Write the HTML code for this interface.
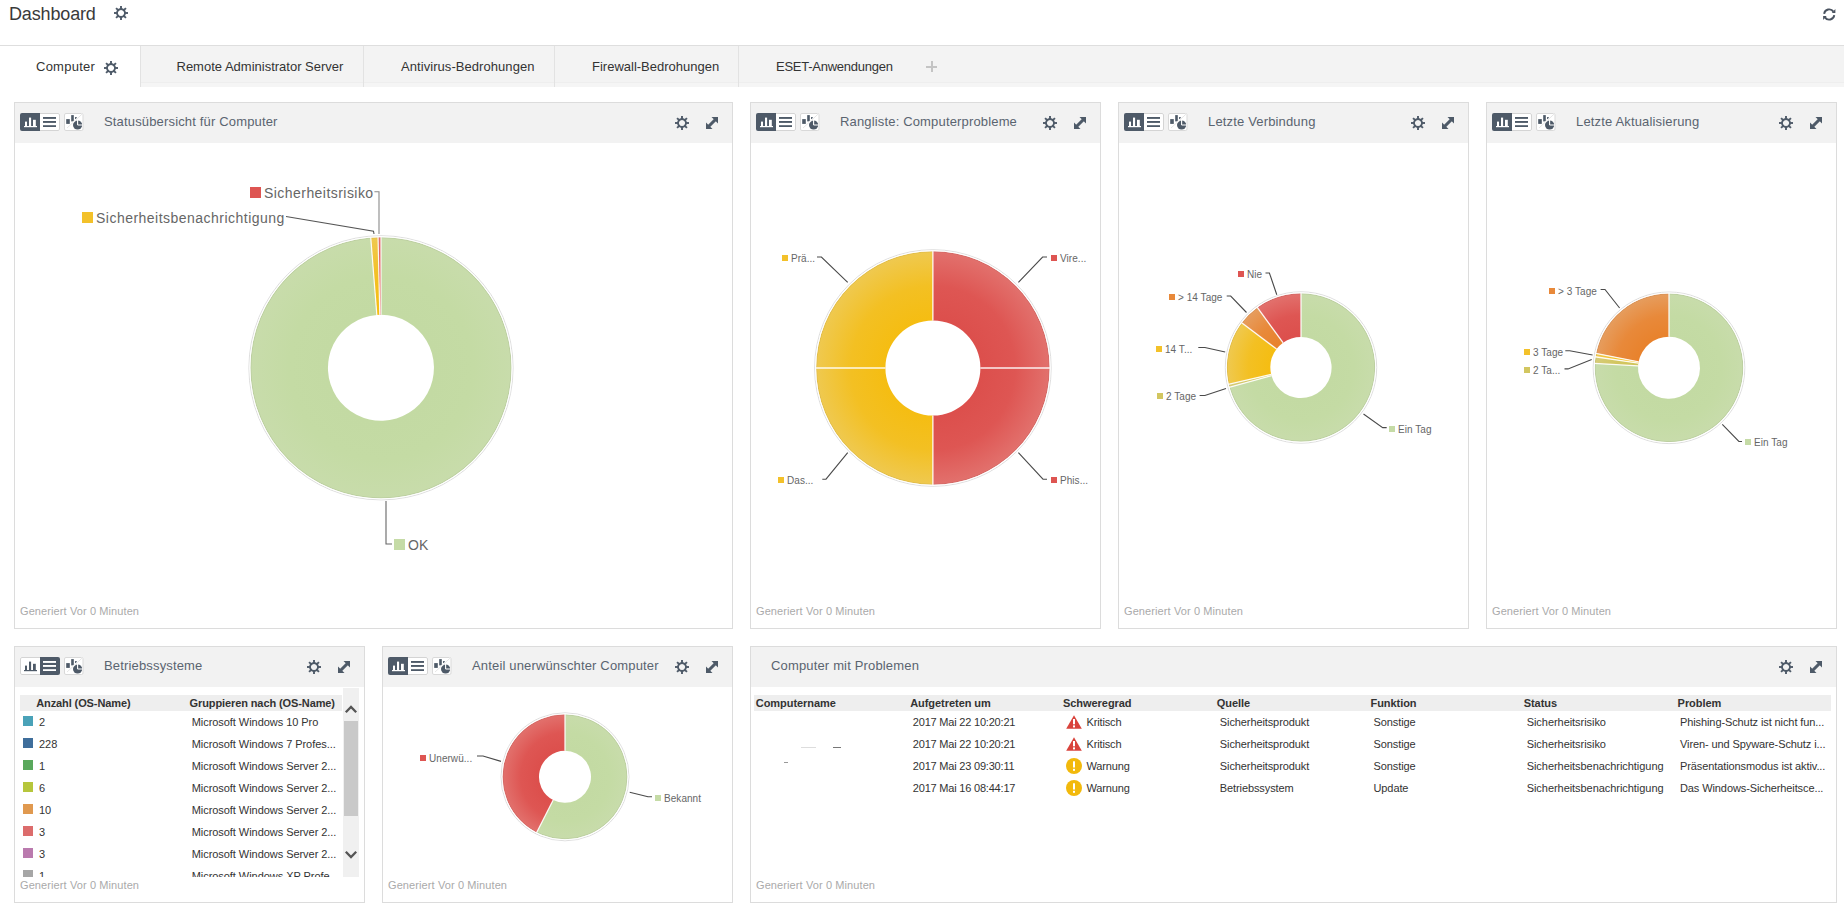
<!DOCTYPE html><html><head><meta charset="utf-8"><style>
html,body{margin:0;padding:0}
body{width:1844px;height:911px;overflow:hidden;position:relative;background:#fff;font-family:"Liberation Sans",sans-serif}
.a{position:absolute;white-space:nowrap;line-height:1}
.panel{border:1px solid #dcdcdc;background:#fff}
</style></head><body>
<svg width="0" height="0" style="position:absolute"><defs>
<symbol id="gear" viewBox="0 0 14 14"><g fill="#4e5a68"><path fill-rule="evenodd" d="M7 2.1A4.9 4.9 0 1 1 6.99 2.1ZM7 3.95A3.05 3.05 0 1 0 7.01 3.95Z"/>
<g id="teeth"><rect x="6.05" y="0" width="1.9" height="3"/><rect x="6.05" y="11" width="1.9" height="3"/><rect x="0" y="6.05" width="3" height="1.9"/><rect x="11" y="6.05" width="3" height="1.9"/></g>
<use href="#teeth" transform="rotate(45 7 7)"/></g></symbol>
<symbol id="exp" viewBox="0 0 12 12"><g fill="#4e5a68"><path d="M5.5 0H12V6.5Z"/><path d="M0 5.5V12H6.5Z"/><path d="M8.9 0.9L11.1 3.1L3.1 11.1L0.9 8.9Z"/></g></symbol>
</defs></svg>

<div class="a" style="left:9.0px;top:4.7px;font-size:18px;color:#3a3a3a;font-weight:normal;letter-spacing:-0.15px">Dashboard</div>
<svg class="a" style="left:114px;top:6px" width="14" height="14"><use href="#gear"/></svg>
<svg class="a" style="left:1823px;top:8px" width="13" height="13" viewBox="0 0 13 13"><g fill="none" stroke="#4a5360" stroke-width="1.9"><path d="M1.14 5.88A5.1 5.1 0 0 1 10.43 3.65"/><path d="M11.26 7.12A5.1 5.1 0 0 1 1.97 9.35"/></g><g fill="#4a5360"><path d="M8.8 4.9H12.4V1.1Z"/><path d="M0.1 8.1H3.7L0.1 12Z"/></g></svg>
<div class="a" style="left:0;top:45px;width:1844px;height:1px;background:#dedede"></div>
<div class="a" style="left:0;top:46px;width:1844px;height:41px;background:#f3f3f3"></div>
<div class="a" style="left:0;top:82px;width:1844px;height:1px;background:#eeeeee"></div>
<div class="a" style="left:0;top:83px;width:1844px;height:4px;background:#f5f5f5"></div>
<div class="a" style="left:0;top:46px;width:140px;height:41px;background:#fff"></div>
<div class="a" style="left:140px;top:46px;width:1px;height:41px;background:#e2e2e2"></div>
<div class="a" style="left:363px;top:46px;width:1px;height:41px;background:#e2e2e2"></div>
<div class="a" style="left:554px;top:46px;width:1px;height:41px;background:#e2e2e2"></div>
<div class="a" style="left:738px;top:46px;width:1px;height:41px;background:#e2e2e2"></div>
<div class="a" style="left:36.0px;top:60.1px;font-size:13px;color:#333;font-weight:normal;letter-spacing:0.25px">Computer</div>
<svg class="a" style="left:104px;top:61px" width="14" height="14"><use href="#gear"/></svg>
<div class="a" style="left:176.5px;top:60.1px;font-size:13px;color:#333;font-weight:normal;">Remote Administrator Server</div>
<div class="a" style="left:401.0px;top:60.1px;font-size:13px;color:#333;font-weight:normal;letter-spacing:0.06px">Antivirus-Bedrohungen</div>
<div class="a" style="left:592.0px;top:60.1px;font-size:13px;color:#333;font-weight:normal;">Firewall-Bedrohungen</div>
<div class="a" style="left:776.0px;top:60.1px;font-size:13px;color:#333;font-weight:normal;letter-spacing:-0.25px">ESET-Anwendungen</div>
<div class="a" style="left:926px;top:65.5px;width:11px;height:2px;background:#c4c4c4"></div>
<div class="a" style="left:930.5px;top:61px;width:2px;height:11px;background:#c4c4c4"></div>
<div class="a panel" style="left:14px;top:102px;width:717px;height:525px"></div>
<div class="a" style="left:15px;top:103px;width:717px;height:40px;background:#f2f2f2"></div>
<svg class="a" style="left:20px;top:113px" width="64" height="18" viewBox="0 0 64 18"><rect x="0.5" y="0.5" width="39" height="17" rx="2" fill="#fff"/><path d="M2 0H20V18H2A2 2 0 0 1 0 16V2A2 2 0 0 1 2 0Z" fill="#4e5a68"/><g fill="#fff"><rect x="4" y="13" width="13" height="1.2"/><rect x="5" y="8.6" width="2" height="4.6"/><rect x="9" y="4.6" width="2.1" height="8.6"/><rect x="13" y="6.8" width="2.8" height="6.4"/></g><path d="M20 0H38A2 2 0 0 1 40 2V16A2 2 0 0 1 38 18H20Z" fill="#fff"/><g fill="#4e5a68"><rect x="23" y="4" width="13" height="1.9"/><rect x="23" y="8" width="13" height="1.9"/><rect x="23" y="12.2" width="13" height="1.8"/></g><path d="M20 0.5H38A1.5 1.5 0 0 1 39.5 2V16A1.5 1.5 0 0 1 38 17.5H20" fill="none" stroke="#d4d4d4"/><rect x="44.5" y="0.5" width="18.5" height="17" rx="1.5" fill="#fff" stroke="#d9d9d9"/><g fill="#4e5a68"><rect x="46.2" y="6.1" width="3.6" height="4.8"/><rect x="51.2" y="2.1" width="2.6" height="6.3"/><rect x="55.1" y="4" width="1.6" height="2"/><circle cx="57.6" cy="12" r="4.6"/></g><path d="M57.6 12V6.5M57.6 12H63" stroke="#fff" stroke-width="1.1"/><line x1="47" y1="15" x2="62.2" y2="1" stroke="#fff" stroke-width="1.4"/><line x1="47" y1="15" x2="62.2" y2="1" stroke="#ccc" stroke-width="0.5"/></svg>
<div class="a" style="left:104.0px;top:115.2px;font-size:13px;color:#5a6470;font-weight:normal;letter-spacing:0.16px">Statusübersicht für Computer</div>
<svg class="a" style="left:675px;top:116px" width="14" height="14"><use href="#gear"/></svg>
<svg class="a" style="left:706px;top:117px" width="12" height="12"><use href="#exp"/></svg>
<div class="a" style="left:20.0px;top:605.6px;font-size:11px;color:#aaa;font-weight:normal;letter-spacing:0.1px">Generiert Vor 0 Minuten</div>
<div class="a panel" style="left:750px;top:102px;width:349px;height:525px"></div>
<div class="a" style="left:751px;top:103px;width:349px;height:40px;background:#f2f2f2"></div>
<svg class="a" style="left:756px;top:113px" width="64" height="18" viewBox="0 0 64 18"><rect x="0.5" y="0.5" width="39" height="17" rx="2" fill="#fff"/><path d="M2 0H20V18H2A2 2 0 0 1 0 16V2A2 2 0 0 1 2 0Z" fill="#4e5a68"/><g fill="#fff"><rect x="4" y="13" width="13" height="1.2"/><rect x="5" y="8.6" width="2" height="4.6"/><rect x="9" y="4.6" width="2.1" height="8.6"/><rect x="13" y="6.8" width="2.8" height="6.4"/></g><path d="M20 0H38A2 2 0 0 1 40 2V16A2 2 0 0 1 38 18H20Z" fill="#fff"/><g fill="#4e5a68"><rect x="23" y="4" width="13" height="1.9"/><rect x="23" y="8" width="13" height="1.9"/><rect x="23" y="12.2" width="13" height="1.8"/></g><path d="M20 0.5H38A1.5 1.5 0 0 1 39.5 2V16A1.5 1.5 0 0 1 38 17.5H20" fill="none" stroke="#d4d4d4"/><rect x="44.5" y="0.5" width="18.5" height="17" rx="1.5" fill="#fff" stroke="#d9d9d9"/><g fill="#4e5a68"><rect x="46.2" y="6.1" width="3.6" height="4.8"/><rect x="51.2" y="2.1" width="2.6" height="6.3"/><rect x="55.1" y="4" width="1.6" height="2"/><circle cx="57.6" cy="12" r="4.6"/></g><path d="M57.6 12V6.5M57.6 12H63" stroke="#fff" stroke-width="1.1"/><line x1="47" y1="15" x2="62.2" y2="1" stroke="#fff" stroke-width="1.4"/><line x1="47" y1="15" x2="62.2" y2="1" stroke="#ccc" stroke-width="0.5"/></svg>
<div class="a" style="left:840.0px;top:115.2px;font-size:13px;color:#5a6470;font-weight:normal;letter-spacing:0.16px">Rangliste: Computerprobleme</div>
<svg class="a" style="left:1043px;top:116px" width="14" height="14"><use href="#gear"/></svg>
<svg class="a" style="left:1074px;top:117px" width="12" height="12"><use href="#exp"/></svg>
<div class="a" style="left:756.0px;top:605.6px;font-size:11px;color:#aaa;font-weight:normal;letter-spacing:0.1px">Generiert Vor 0 Minuten</div>
<div class="a panel" style="left:1118px;top:102px;width:349px;height:525px"></div>
<div class="a" style="left:1119px;top:103px;width:349px;height:40px;background:#f2f2f2"></div>
<svg class="a" style="left:1124px;top:113px" width="64" height="18" viewBox="0 0 64 18"><rect x="0.5" y="0.5" width="39" height="17" rx="2" fill="#fff"/><path d="M2 0H20V18H2A2 2 0 0 1 0 16V2A2 2 0 0 1 2 0Z" fill="#4e5a68"/><g fill="#fff"><rect x="4" y="13" width="13" height="1.2"/><rect x="5" y="8.6" width="2" height="4.6"/><rect x="9" y="4.6" width="2.1" height="8.6"/><rect x="13" y="6.8" width="2.8" height="6.4"/></g><path d="M20 0H38A2 2 0 0 1 40 2V16A2 2 0 0 1 38 18H20Z" fill="#fff"/><g fill="#4e5a68"><rect x="23" y="4" width="13" height="1.9"/><rect x="23" y="8" width="13" height="1.9"/><rect x="23" y="12.2" width="13" height="1.8"/></g><path d="M20 0.5H38A1.5 1.5 0 0 1 39.5 2V16A1.5 1.5 0 0 1 38 17.5H20" fill="none" stroke="#d4d4d4"/><rect x="44.5" y="0.5" width="18.5" height="17" rx="1.5" fill="#fff" stroke="#d9d9d9"/><g fill="#4e5a68"><rect x="46.2" y="6.1" width="3.6" height="4.8"/><rect x="51.2" y="2.1" width="2.6" height="6.3"/><rect x="55.1" y="4" width="1.6" height="2"/><circle cx="57.6" cy="12" r="4.6"/></g><path d="M57.6 12V6.5M57.6 12H63" stroke="#fff" stroke-width="1.1"/><line x1="47" y1="15" x2="62.2" y2="1" stroke="#fff" stroke-width="1.4"/><line x1="47" y1="15" x2="62.2" y2="1" stroke="#ccc" stroke-width="0.5"/></svg>
<div class="a" style="left:1208.0px;top:115.2px;font-size:13px;color:#5a6470;font-weight:normal;letter-spacing:0.16px">Letzte Verbindung</div>
<svg class="a" style="left:1411px;top:116px" width="14" height="14"><use href="#gear"/></svg>
<svg class="a" style="left:1442px;top:117px" width="12" height="12"><use href="#exp"/></svg>
<div class="a" style="left:1124.0px;top:605.6px;font-size:11px;color:#aaa;font-weight:normal;letter-spacing:0.1px">Generiert Vor 0 Minuten</div>
<div class="a panel" style="left:1486px;top:102px;width:349px;height:525px"></div>
<div class="a" style="left:1487px;top:103px;width:349px;height:40px;background:#f2f2f2"></div>
<svg class="a" style="left:1492px;top:113px" width="64" height="18" viewBox="0 0 64 18"><rect x="0.5" y="0.5" width="39" height="17" rx="2" fill="#fff"/><path d="M2 0H20V18H2A2 2 0 0 1 0 16V2A2 2 0 0 1 2 0Z" fill="#4e5a68"/><g fill="#fff"><rect x="4" y="13" width="13" height="1.2"/><rect x="5" y="8.6" width="2" height="4.6"/><rect x="9" y="4.6" width="2.1" height="8.6"/><rect x="13" y="6.8" width="2.8" height="6.4"/></g><path d="M20 0H38A2 2 0 0 1 40 2V16A2 2 0 0 1 38 18H20Z" fill="#fff"/><g fill="#4e5a68"><rect x="23" y="4" width="13" height="1.9"/><rect x="23" y="8" width="13" height="1.9"/><rect x="23" y="12.2" width="13" height="1.8"/></g><path d="M20 0.5H38A1.5 1.5 0 0 1 39.5 2V16A1.5 1.5 0 0 1 38 17.5H20" fill="none" stroke="#d4d4d4"/><rect x="44.5" y="0.5" width="18.5" height="17" rx="1.5" fill="#fff" stroke="#d9d9d9"/><g fill="#4e5a68"><rect x="46.2" y="6.1" width="3.6" height="4.8"/><rect x="51.2" y="2.1" width="2.6" height="6.3"/><rect x="55.1" y="4" width="1.6" height="2"/><circle cx="57.6" cy="12" r="4.6"/></g><path d="M57.6 12V6.5M57.6 12H63" stroke="#fff" stroke-width="1.1"/><line x1="47" y1="15" x2="62.2" y2="1" stroke="#fff" stroke-width="1.4"/><line x1="47" y1="15" x2="62.2" y2="1" stroke="#ccc" stroke-width="0.5"/></svg>
<div class="a" style="left:1576.0px;top:115.2px;font-size:13px;color:#5a6470;font-weight:normal;letter-spacing:0.16px">Letzte Aktualisierung</div>
<svg class="a" style="left:1779px;top:116px" width="14" height="14"><use href="#gear"/></svg>
<svg class="a" style="left:1810px;top:117px" width="12" height="12"><use href="#exp"/></svg>
<div class="a" style="left:1492.0px;top:605.6px;font-size:11px;color:#aaa;font-weight:normal;letter-spacing:0.1px">Generiert Vor 0 Minuten</div>
<div class="a panel" style="left:14px;top:646px;width:349px;height:255px"></div>
<div class="a" style="left:15px;top:647px;width:349px;height:40px;background:#f2f2f2"></div>
<svg class="a" style="left:20px;top:657px" width="64" height="18" viewBox="0 0 64 18"><rect x="0.5" y="0.5" width="39" height="17" rx="2" fill="#fff"/><path d="M2 0H20V18H2A2 2 0 0 1 0 16V2A2 2 0 0 1 2 0Z" fill="#fff"/><g fill="#4e5a68"><rect x="4" y="13" width="13" height="1.2"/><rect x="5" y="8.6" width="2" height="4.6"/><rect x="9" y="4.6" width="2.1" height="8.6"/><rect x="13" y="6.8" width="2.8" height="6.4"/></g><path d="M20 0H38A2 2 0 0 1 40 2V16A2 2 0 0 1 38 18H20Z" fill="#4e5a68"/><g fill="#fff"><rect x="23" y="4" width="13" height="1.9"/><rect x="23" y="8" width="13" height="1.9"/><rect x="23" y="12.2" width="13" height="1.8"/></g><path d="M20 0.5H2A1.5 1.5 0 0 0 0.5 2V16A1.5 1.5 0 0 0 2 17.5H20" fill="none" stroke="#d4d4d4"/><rect x="44.5" y="0.5" width="18.5" height="17" rx="1.5" fill="#fff" stroke="#d9d9d9"/><g fill="#4e5a68"><rect x="46.2" y="6.1" width="3.6" height="4.8"/><rect x="51.2" y="2.1" width="2.6" height="6.3"/><rect x="55.1" y="4" width="1.6" height="2"/><circle cx="57.6" cy="12" r="4.6"/></g><path d="M57.6 12V6.5M57.6 12H63" stroke="#fff" stroke-width="1.1"/><line x1="47" y1="15" x2="62.2" y2="1" stroke="#fff" stroke-width="1.4"/><line x1="47" y1="15" x2="62.2" y2="1" stroke="#ccc" stroke-width="0.5"/></svg>
<div class="a" style="left:104.0px;top:659.2px;font-size:13px;color:#5a6470;font-weight:normal;letter-spacing:0.16px">Betriebssysteme</div>
<svg class="a" style="left:307px;top:660px" width="14" height="14"><use href="#gear"/></svg>
<svg class="a" style="left:338px;top:661px" width="12" height="12"><use href="#exp"/></svg>
<div class="a" style="left:20.0px;top:879.5px;font-size:11px;color:#aaa;font-weight:normal;letter-spacing:0.1px">Generiert Vor 0 Minuten</div>
<div class="a panel" style="left:382px;top:646px;width:349px;height:255px"></div>
<div class="a" style="left:383px;top:647px;width:349px;height:40px;background:#f2f2f2"></div>
<svg class="a" style="left:388px;top:657px" width="64" height="18" viewBox="0 0 64 18"><rect x="0.5" y="0.5" width="39" height="17" rx="2" fill="#fff"/><path d="M2 0H20V18H2A2 2 0 0 1 0 16V2A2 2 0 0 1 2 0Z" fill="#4e5a68"/><g fill="#fff"><rect x="4" y="13" width="13" height="1.2"/><rect x="5" y="8.6" width="2" height="4.6"/><rect x="9" y="4.6" width="2.1" height="8.6"/><rect x="13" y="6.8" width="2.8" height="6.4"/></g><path d="M20 0H38A2 2 0 0 1 40 2V16A2 2 0 0 1 38 18H20Z" fill="#fff"/><g fill="#4e5a68"><rect x="23" y="4" width="13" height="1.9"/><rect x="23" y="8" width="13" height="1.9"/><rect x="23" y="12.2" width="13" height="1.8"/></g><path d="M20 0.5H38A1.5 1.5 0 0 1 39.5 2V16A1.5 1.5 0 0 1 38 17.5H20" fill="none" stroke="#d4d4d4"/><rect x="44.5" y="0.5" width="18.5" height="17" rx="1.5" fill="#fff" stroke="#d9d9d9"/><g fill="#4e5a68"><rect x="46.2" y="6.1" width="3.6" height="4.8"/><rect x="51.2" y="2.1" width="2.6" height="6.3"/><rect x="55.1" y="4" width="1.6" height="2"/><circle cx="57.6" cy="12" r="4.6"/></g><path d="M57.6 12V6.5M57.6 12H63" stroke="#fff" stroke-width="1.1"/><line x1="47" y1="15" x2="62.2" y2="1" stroke="#fff" stroke-width="1.4"/><line x1="47" y1="15" x2="62.2" y2="1" stroke="#ccc" stroke-width="0.5"/></svg>
<div class="a" style="left:472.0px;top:659.2px;font-size:13px;color:#5a6470;font-weight:normal;letter-spacing:0.16px">Anteil unerwünschter Computer</div>
<svg class="a" style="left:675px;top:660px" width="14" height="14"><use href="#gear"/></svg>
<svg class="a" style="left:706px;top:661px" width="12" height="12"><use href="#exp"/></svg>
<div class="a" style="left:388.0px;top:879.5px;font-size:11px;color:#aaa;font-weight:normal;letter-spacing:0.1px">Generiert Vor 0 Minuten</div>
<div class="a panel" style="left:750px;top:646px;width:1085px;height:255px"></div>
<div class="a" style="left:751px;top:647px;width:1085px;height:40px;background:#f2f2f2"></div>
<div class="a" style="left:771.0px;top:659.2px;font-size:13px;color:#5a6470;font-weight:normal;letter-spacing:0.16px">Computer mit Problemen</div>
<svg class="a" style="left:1779px;top:660px" width="14" height="14"><use href="#gear"/></svg>
<svg class="a" style="left:1810px;top:661px" width="12" height="12"><use href="#exp"/></svg>
<div class="a" style="left:756.0px;top:879.5px;font-size:11px;color:#aaa;font-weight:normal;letter-spacing:0.1px">Generiert Vor 0 Minuten</div>
<svg class="a" style="left:0;top:0" width="1844" height="911" viewBox="0 0 1844 911"><defs>
<radialGradient id="g1c0" gradientUnits="userSpaceOnUse" cx="381" cy="367.8" r="130.6"><stop offset="0.406" stop-color="#c3daa3"/><stop offset="0.703" stop-color="#c4dba4"/><stop offset="1" stop-color="#c8dcab"/></radialGradient>
<radialGradient id="g1c1" gradientUnits="userSpaceOnUse" cx="381" cy="367.8" r="130.6"><stop offset="0.406" stop-color="#f5bd12"/><stop offset="0.703" stop-color="#f3c023"/><stop offset="1" stop-color="#efc950"/></radialGradient>
<radialGradient id="g1c2" gradientUnits="userSpaceOnUse" cx="381" cy="367.8" r="130.6"><stop offset="0.406" stop-color="#dc4f4c"/><stop offset="0.703" stop-color="#de5653"/><stop offset="1" stop-color="#e2716d"/></radialGradient>
</defs>
<circle cx="381" cy="367.8" r="132.1" fill="none" stroke="#dedede" stroke-width="1"/>
<path d="M381.00 237.20A130.6 130.6 0 1 1 370.75 237.60L376.84 314.96A53 53 0 1 0 381.00 314.80Z" fill="url(#g1c0)"/>
<path d="M370.75 237.60A130.6 130.6 0 0 1 378.04 237.23L379.80 314.81A53 53 0 0 0 376.84 314.96Z" fill="url(#g1c1)"/>
<path d="M378.04 237.23A130.6 130.6 0 0 1 381.00 237.20L381.00 314.80A53 53 0 0 0 379.80 314.81Z" fill="url(#g1c2)"/>
<circle cx="381" cy="367.8" r="130.1" fill="none" stroke="#000" stroke-opacity="0.06" stroke-width="1"/>
<line x1="381.00" y1="236.70" x2="381.00" y2="314.80" stroke="#fff" stroke-opacity="0.9" stroke-width="1.2"/>
<line x1="370.71" y1="237.10" x2="376.84" y2="314.96" stroke="#fff" stroke-opacity="0.9" stroke-width="1.2"/>
<line x1="378.03" y1="236.73" x2="379.80" y2="314.81" stroke="#fff" stroke-opacity="0.9" stroke-width="1.2"/>
<circle cx="381" cy="367.8" r="131.1" fill="none" stroke="#fff" stroke-width="1" stroke-opacity="0.85"/>
<path d="M374.4 191.8 L379.0 191.8 L379.0 234.0" fill="none" stroke="#8a8a8a" stroke-width="1.1"/>
<path d="M286.0 216.5 L373.5 231.2 L374.0 234.0" fill="none" stroke="#555" stroke-width="1.1"/>
<path d="M386.0 501.0 L386.0 544.0 L392.0 544.0" fill="none" stroke="#666" stroke-width="1.1"/>
</svg>
<div class="a" style="left:250px;top:187px;width:11px;height:11px;background:#de5552"></div>
<div class="a" style="left:264.0px;top:186.2px;font-size:14px;color:#666;font-weight:normal;letter-spacing:0.45px">Sicherheitsrisiko</div>
<div class="a" style="left:82px;top:212px;width:11px;height:11px;background:#f3c12a"></div>
<div class="a" style="left:96.0px;top:211.2px;font-size:14px;color:#666;font-weight:normal;letter-spacing:0.48px">Sicherheitsbenachrichtigung</div>
<div class="a" style="left:394px;top:539px;width:11px;height:11px;background:#c5dba6"></div>
<div class="a" style="left:408.0px;top:538.2px;font-size:14px;color:#666;font-weight:normal;letter-spacing:0px">OK</div>
<svg class="a" style="left:0;top:0" width="1844" height="911" viewBox="0 0 1844 911"><defs>
<radialGradient id="g2c0" gradientUnits="userSpaceOnUse" cx="932.9" cy="368" r="116.8"><stop offset="0.407" stop-color="#dc4f4c"/><stop offset="0.703" stop-color="#de5653"/><stop offset="1" stop-color="#e2716d"/></radialGradient>
<radialGradient id="g2c1" gradientUnits="userSpaceOnUse" cx="932.9" cy="368" r="116.8"><stop offset="0.407" stop-color="#f5bd12"/><stop offset="0.703" stop-color="#f3c023"/><stop offset="1" stop-color="#efc950"/></radialGradient>
</defs>
<circle cx="932.9" cy="368" r="118.3" fill="none" stroke="#dedede" stroke-width="1"/>
<path d="M932.90 251.20A116.8 116.8 0 0 1 1049.70 368.00L980.40 368.00A47.5 47.5 0 0 0 932.90 320.50Z" fill="url(#g2c0)"/>
<path d="M1049.70 368.00A116.8 116.8 0 0 1 932.90 484.80L932.90 415.50A47.5 47.5 0 0 0 980.40 368.00Z" fill="url(#g2c0)"/>
<path d="M932.90 484.80A116.8 116.8 0 0 1 816.10 368.00L885.40 368.00A47.5 47.5 0 0 0 932.90 415.50Z" fill="url(#g2c1)"/>
<path d="M816.10 368.00A116.8 116.8 0 0 1 932.90 251.20L932.90 320.50A47.5 47.5 0 0 0 885.40 368.00Z" fill="url(#g2c1)"/>
<circle cx="932.9" cy="368" r="116.3" fill="none" stroke="#000" stroke-opacity="0.06" stroke-width="1"/>
<line x1="932.90" y1="250.70" x2="932.90" y2="320.50" stroke="#fff" stroke-opacity="0.9" stroke-width="1.3"/>
<line x1="1050.20" y1="368.00" x2="980.40" y2="368.00" stroke="#fff" stroke-opacity="0.9" stroke-width="1.3"/>
<line x1="932.90" y1="485.30" x2="932.90" y2="415.50" stroke="#fff" stroke-opacity="0.9" stroke-width="1.3"/>
<line x1="815.60" y1="368.00" x2="885.40" y2="368.00" stroke="#fff" stroke-opacity="0.9" stroke-width="1.3"/>
<circle cx="932.9" cy="368" r="117.3" fill="none" stroke="#fff" stroke-width="1" stroke-opacity="0.85"/>
<path d="M817.0 257.0 L821.4 257.0 L847.7 282.3" fill="none" stroke="#4a4a4a" stroke-width="1.1"/>
<path d="M1047.0 257.0 L1042.6 257.0 L1018.4 282.3" fill="none" stroke="#4a4a4a" stroke-width="1.1"/>
<path d="M822.3 479.2 L826.0 479.2 L847.7 452.7" fill="none" stroke="#4a4a4a" stroke-width="1.1"/>
<path d="M1047.0 479.2 L1043.0 479.2 L1018.4 452.7" fill="none" stroke="#4a4a4a" stroke-width="1.1"/>
</svg>
<div class="a" style="left:782px;top:255px;width:6px;height:6px;background:#f3c12a"></div>
<div class="a" style="left:791.0px;top:253.5px;font-size:10px;color:#666;font-weight:normal;letter-spacing:0.05px">Prä...</div>
<div class="a" style="left:1051px;top:255px;width:6px;height:6px;background:#de5552"></div>
<div class="a" style="left:1060.0px;top:253.5px;font-size:10px;color:#666;font-weight:normal;letter-spacing:0.05px">Vire...</div>
<div class="a" style="left:778px;top:477px;width:6px;height:6px;background:#f3c12a"></div>
<div class="a" style="left:787.0px;top:475.5px;font-size:10px;color:#666;font-weight:normal;letter-spacing:0.05px">Das...</div>
<div class="a" style="left:1051px;top:477px;width:6px;height:6px;background:#de5552"></div>
<div class="a" style="left:1060.0px;top:475.5px;font-size:10px;color:#666;font-weight:normal;letter-spacing:0.05px">Phis...</div>
<svg class="a" style="left:0;top:0" width="1844" height="911" viewBox="0 0 1844 911"><defs>
<radialGradient id="g3c0" gradientUnits="userSpaceOnUse" cx="1301" cy="367.5" r="74.2"><stop offset="0.412" stop-color="#c3daa3"/><stop offset="0.706" stop-color="#c4dba4"/><stop offset="1" stop-color="#c8dcab"/></radialGradient>
<radialGradient id="g3c1" gradientUnits="userSpaceOnUse" cx="1301" cy="367.5" r="74.2"><stop offset="0.412" stop-color="#d0c45a"/><stop offset="0.706" stop-color="#d2c660"/><stop offset="1" stop-color="#d6cc78"/></radialGradient>
<radialGradient id="g3c2" gradientUnits="userSpaceOnUse" cx="1301" cy="367.5" r="74.2"><stop offset="0.412" stop-color="#f5bd12"/><stop offset="0.706" stop-color="#f3c023"/><stop offset="1" stop-color="#efc950"/></radialGradient>
<radialGradient id="g3c3" gradientUnits="userSpaceOnUse" cx="1301" cy="367.5" r="74.2"><stop offset="0.412" stop-color="#e8822c"/><stop offset="0.706" stop-color="#e8893a"/><stop offset="1" stop-color="#e69d5e"/></radialGradient>
<radialGradient id="g3c4" gradientUnits="userSpaceOnUse" cx="1301" cy="367.5" r="74.2"><stop offset="0.412" stop-color="#dc4f4c"/><stop offset="0.706" stop-color="#de5653"/><stop offset="1" stop-color="#e2716d"/></radialGradient>
</defs>
<circle cx="1301" cy="367.5" r="75.7" fill="none" stroke="#dedede" stroke-width="1"/>
<path d="M1301.00 293.30A74.2 74.2 0 1 1 1229.46 387.20L1271.50 375.63A30.6 30.6 0 1 0 1301.00 336.90Z" fill="url(#g3c0)"/>
<path d="M1229.46 387.20A74.2 74.2 0 0 1 1228.70 384.19L1271.18 374.38A30.6 30.6 0 0 0 1271.50 375.63Z" fill="url(#g3c1)"/>
<path d="M1228.70 384.19A74.2 74.2 0 0 1 1241.74 322.85L1276.56 349.08A30.6 30.6 0 0 0 1271.18 374.38Z" fill="url(#g3c2)"/>
<path d="M1241.74 322.85A74.2 74.2 0 0 1 1257.39 307.47L1283.01 342.74A30.6 30.6 0 0 0 1276.56 349.08Z" fill="url(#g3c3)"/>
<path d="M1257.39 307.47A74.2 74.2 0 0 1 1301.00 293.30L1301.00 336.90A30.6 30.6 0 0 0 1283.01 342.74Z" fill="url(#g3c4)"/>
<circle cx="1301" cy="367.5" r="73.7" fill="none" stroke="#000" stroke-opacity="0.06" stroke-width="1"/>
<line x1="1301.00" y1="292.80" x2="1301.00" y2="336.90" stroke="#fff" stroke-opacity="0.9" stroke-width="1.3"/>
<line x1="1228.98" y1="387.34" x2="1271.50" y2="375.63" stroke="#fff" stroke-opacity="0.9" stroke-width="1.3"/>
<line x1="1228.21" y1="384.30" x2="1271.18" y2="374.38" stroke="#fff" stroke-opacity="0.9" stroke-width="1.3"/>
<line x1="1241.34" y1="322.54" x2="1276.56" y2="349.08" stroke="#fff" stroke-opacity="0.9" stroke-width="1.3"/>
<line x1="1257.09" y1="307.07" x2="1283.01" y2="342.74" stroke="#fff" stroke-opacity="0.9" stroke-width="1.3"/>
<circle cx="1301" cy="367.5" r="74.7" fill="none" stroke="#fff" stroke-width="1" stroke-opacity="0.85"/>
<path d="M1265.5 273.0 L1269.4 273.0 L1276.8 294.8" fill="none" stroke="#4a4a4a" stroke-width="1.1"/>
<path d="M1226.7 296.0 L1230.7 296.0 L1246.5 312.5" fill="none" stroke="#4a4a4a" stroke-width="1.1"/>
<path d="M1198.3 347.5 L1204.9 347.5 L1225.2 352.0" fill="none" stroke="#4a4a4a" stroke-width="1.1"/>
<path d="M1199.6 395.5 L1204.9 395.5 L1226.0 388.4" fill="none" stroke="#4a4a4a" stroke-width="1.1"/>
<path d="M1363.5 414.0 L1382.7 427.6 L1386.7 427.6" fill="none" stroke="#4a4a4a" stroke-width="1.1"/>
</svg>
<div class="a" style="left:1238px;top:271px;width:6px;height:6px;background:#de5552"></div>
<div class="a" style="left:1247.0px;top:269.5px;font-size:10px;color:#666;font-weight:normal;letter-spacing:0.05px">Nie</div>
<div class="a" style="left:1169px;top:294px;width:6px;height:6px;background:#e8893a"></div>
<div class="a" style="left:1178.0px;top:292.5px;font-size:10px;color:#666;font-weight:normal;letter-spacing:0.05px">&gt; 14 Tage</div>
<div class="a" style="left:1156px;top:346px;width:6px;height:6px;background:#f3c12a"></div>
<div class="a" style="left:1165.0px;top:344.5px;font-size:10px;color:#666;font-weight:normal;letter-spacing:0.05px">14 T...</div>
<div class="a" style="left:1157px;top:393px;width:6px;height:6px;background:#d2c660"></div>
<div class="a" style="left:1166.0px;top:391.5px;font-size:10px;color:#666;font-weight:normal;letter-spacing:0.05px">2 Tage</div>
<div class="a" style="left:1389px;top:426px;width:6px;height:6px;background:#c5dba6"></div>
<div class="a" style="left:1398.0px;top:424.5px;font-size:10px;color:#666;font-weight:normal;letter-spacing:0.05px">Ein Tag</div>
<svg class="a" style="left:0;top:0" width="1844" height="911" viewBox="0 0 1844 911"><defs>
<radialGradient id="g4c0" gradientUnits="userSpaceOnUse" cx="1669" cy="367.8" r="74.3"><stop offset="0.417" stop-color="#c3daa3"/><stop offset="0.709" stop-color="#c4dba4"/><stop offset="1" stop-color="#c8dcab"/></radialGradient>
<radialGradient id="g4c1" gradientUnits="userSpaceOnUse" cx="1669" cy="367.8" r="74.3"><stop offset="0.417" stop-color="#d0c45a"/><stop offset="0.709" stop-color="#d2c660"/><stop offset="1" stop-color="#d6cc78"/></radialGradient>
<radialGradient id="g4c2" gradientUnits="userSpaceOnUse" cx="1669" cy="367.8" r="74.3"><stop offset="0.417" stop-color="#f5bd12"/><stop offset="0.709" stop-color="#f3c023"/><stop offset="1" stop-color="#efc950"/></radialGradient>
<radialGradient id="g4c3" gradientUnits="userSpaceOnUse" cx="1669" cy="367.8" r="74.3"><stop offset="0.417" stop-color="#e8822c"/><stop offset="0.709" stop-color="#e8893a"/><stop offset="1" stop-color="#e69d5e"/></radialGradient>
</defs>
<circle cx="1669" cy="367.8" r="75.8" fill="none" stroke="#dedede" stroke-width="1"/>
<path d="M1669.00 293.50A74.3 74.3 0 1 1 1594.83 363.39L1638.05 365.96A31 31 0 1 0 1669.00 336.80Z" fill="url(#g4c0)"/>
<path d="M1594.83 363.39A74.3 74.3 0 0 1 1595.52 356.82L1638.34 363.22A31 31 0 0 0 1638.05 365.96Z" fill="url(#g4c1)"/>
<path d="M1595.52 356.82A74.3 74.3 0 0 1 1596.12 353.37L1638.59 361.78A31 31 0 0 0 1638.34 363.22Z" fill="url(#g4c2)"/>
<path d="M1596.12 353.37A74.3 74.3 0 0 1 1669.00 293.50L1669.00 336.80A31 31 0 0 0 1638.59 361.78Z" fill="url(#g4c3)"/>
<circle cx="1669" cy="367.8" r="73.8" fill="none" stroke="#000" stroke-opacity="0.06" stroke-width="1"/>
<line x1="1669.00" y1="293.00" x2="1669.00" y2="336.80" stroke="#fff" stroke-opacity="0.9" stroke-width="1.3"/>
<line x1="1594.33" y1="363.36" x2="1638.05" y2="365.96" stroke="#fff" stroke-opacity="0.9" stroke-width="1.3"/>
<line x1="1595.02" y1="356.74" x2="1638.34" y2="363.22" stroke="#fff" stroke-opacity="0.9" stroke-width="1.3"/>
<line x1="1595.62" y1="353.27" x2="1638.59" y2="361.78" stroke="#fff" stroke-opacity="0.9" stroke-width="1.3"/>
<circle cx="1669" cy="367.8" r="74.8" fill="none" stroke="#fff" stroke-width="1" stroke-opacity="0.85"/>
<path d="M1600.6 289.5 L1605.0 289.5 L1619.6 308.0" fill="none" stroke="#4a4a4a" stroke-width="1.1"/>
<path d="M1565.3 350.7 L1569.7 350.7 L1592.6 355.0" fill="none" stroke="#4a4a4a" stroke-width="1.1"/>
<path d="M1564.5 368.9 L1568.0 368.9 L1591.7 359.5" fill="none" stroke="#4a4a4a" stroke-width="1.1"/>
<path d="M1722.3 424.4 L1738.9 441.5 L1742.0 441.5" fill="none" stroke="#4a4a4a" stroke-width="1.1"/>
</svg>
<div class="a" style="left:1549px;top:288px;width:6px;height:6px;background:#e8893a"></div>
<div class="a" style="left:1558.0px;top:286.5px;font-size:10px;color:#666;font-weight:normal;letter-spacing:0.05px">&gt; 3 Tage</div>
<div class="a" style="left:1524px;top:349px;width:6px;height:6px;background:#f3c12a"></div>
<div class="a" style="left:1533.0px;top:347.5px;font-size:10px;color:#666;font-weight:normal;letter-spacing:0.05px">3 Tage</div>
<div class="a" style="left:1524px;top:367px;width:6px;height:6px;background:#d2c660"></div>
<div class="a" style="left:1533.0px;top:365.5px;font-size:10px;color:#666;font-weight:normal;letter-spacing:0.05px">2 Ta...</div>
<div class="a" style="left:1745px;top:439px;width:6px;height:6px;background:#c5dba6"></div>
<div class="a" style="left:1754.0px;top:437.5px;font-size:10px;color:#666;font-weight:normal;letter-spacing:0.05px">Ein Tag</div>
<svg class="a" style="left:0;top:0" width="1844" height="911" viewBox="0 0 1844 911"><defs>
<radialGradient id="g5c0" gradientUnits="userSpaceOnUse" cx="565" cy="776.8" r="62.5"><stop offset="0.416" stop-color="#c3daa3"/><stop offset="0.708" stop-color="#c4dba4"/><stop offset="1" stop-color="#c8dcab"/></radialGradient>
<radialGradient id="g5c1" gradientUnits="userSpaceOnUse" cx="565" cy="776.8" r="62.5"><stop offset="0.416" stop-color="#dc4f4c"/><stop offset="0.708" stop-color="#de5653"/><stop offset="1" stop-color="#e2716d"/></radialGradient>
</defs>
<circle cx="565" cy="776.8" r="64.0" fill="none" stroke="#dedede" stroke-width="1"/>
<path d="M565.00 714.30A62.5 62.5 0 1 1 536.63 832.49L553.20 799.97A26 26 0 1 0 565.00 750.80Z" fill="url(#g5c0)"/>
<path d="M536.63 832.49A62.5 62.5 0 0 1 565.00 714.30L565.00 750.80A26 26 0 0 0 553.20 799.97Z" fill="url(#g5c1)"/>
<circle cx="565" cy="776.8" r="62.0" fill="none" stroke="#000" stroke-opacity="0.06" stroke-width="1"/>
<line x1="565.00" y1="713.80" x2="565.00" y2="750.80" stroke="#fff" stroke-opacity="0.9" stroke-width="1.3"/>
<line x1="536.40" y1="832.93" x2="553.20" y2="799.97" stroke="#fff" stroke-opacity="0.9" stroke-width="1.3"/>
<circle cx="565" cy="776.8" r="63.0" fill="none" stroke="#fff" stroke-width="1" stroke-opacity="0.85"/>
<path d="M477.0 756.0 L483.0 756.0 L501.0 761.4" fill="none" stroke="#4a4a4a" stroke-width="1.1"/>
<path d="M629.7 792.3 L648.0 796.8 L652.0 796.8" fill="none" stroke="#4a4a4a" stroke-width="1.1"/>
</svg>
<div class="a" style="left:420px;top:755px;width:6px;height:6px;background:#de5552"></div>
<div class="a" style="left:429.0px;top:753.5px;font-size:10px;color:#666;font-weight:normal;letter-spacing:0.05px">Unerwü...</div>
<div class="a" style="left:655px;top:795px;width:6px;height:6px;background:#c5dba6"></div>
<div class="a" style="left:664.0px;top:793.5px;font-size:10px;color:#666;font-weight:normal;letter-spacing:0.05px">Bekannt</div>
<div class="a" style="left:20px;top:695px;width:322px;height:16px;background:#eeeeee"></div>
<div class="a" style="left:36.2px;top:698.3px;font-size:11px;color:#333;font-weight:bold;letter-spacing:-0.1px">Anzahl (OS-Name)</div>
<div class="a" style="left:189.5px;top:698.3px;font-size:11px;color:#333;font-weight:bold;letter-spacing:-0.1px">Gruppieren nach (OS-Name)</div>
<div class="a" style="left:16px;top:712px;width:327px;height:165px;overflow:hidden">
<div class="a" style="left:7px;top:4px;width:10px;height:10px;background:#4aa2b8"></div>
<div class="a" style="left:22.9px;top:5.0px;font-size:11px;color:#333">2</div>
<div class="a" style="left:175.7px;top:5.0px;font-size:11px;color:#333;letter-spacing:-0.05px">Microsoft Windows 10 Pro</div>
<div class="a" style="left:7px;top:26px;width:10px;height:10px;background:#3f6e9b"></div>
<div class="a" style="left:22.9px;top:27.0px;font-size:11px;color:#333">228</div>
<div class="a" style="left:175.7px;top:27.0px;font-size:11px;color:#333;letter-spacing:-0.05px">Microsoft Windows 7 Profes...</div>
<div class="a" style="left:7px;top:48px;width:10px;height:10px;background:#5aa85c"></div>
<div class="a" style="left:22.9px;top:49.0px;font-size:11px;color:#333">1</div>
<div class="a" style="left:175.7px;top:49.0px;font-size:11px;color:#333;letter-spacing:-0.05px">Microsoft Windows Server 2...</div>
<div class="a" style="left:7px;top:70px;width:10px;height:10px;background:#b6c63c"></div>
<div class="a" style="left:22.9px;top:71.0px;font-size:11px;color:#333">6</div>
<div class="a" style="left:175.7px;top:71.0px;font-size:11px;color:#333;letter-spacing:-0.05px">Microsoft Windows Server 2...</div>
<div class="a" style="left:7px;top:92px;width:10px;height:10px;background:#e0994f"></div>
<div class="a" style="left:22.9px;top:93.0px;font-size:11px;color:#333">10</div>
<div class="a" style="left:175.7px;top:93.0px;font-size:11px;color:#333;letter-spacing:-0.05px">Microsoft Windows Server 2...</div>
<div class="a" style="left:7px;top:114px;width:10px;height:10px;background:#dc6c6c"></div>
<div class="a" style="left:22.9px;top:115.0px;font-size:11px;color:#333">3</div>
<div class="a" style="left:175.7px;top:115.0px;font-size:11px;color:#333;letter-spacing:-0.05px">Microsoft Windows Server 2...</div>
<div class="a" style="left:7px;top:136px;width:10px;height:10px;background:#ba7aae"></div>
<div class="a" style="left:22.9px;top:137.0px;font-size:11px;color:#333">3</div>
<div class="a" style="left:175.7px;top:137.0px;font-size:11px;color:#333;letter-spacing:-0.05px">Microsoft Windows Server 2...</div>
<div class="a" style="left:7px;top:158px;width:10px;height:10px;background:#a6a6a6"></div>
<div class="a" style="left:22.9px;top:159.0px;font-size:11px;color:#333">1</div>
<div class="a" style="left:175.7px;top:159.0px;font-size:11px;color:#333;letter-spacing:-0.05px">Microsoft Windows XP Profe...</div>
</div>
<div class="a" style="left:343px;top:688px;width:16px;height:189px;background:#f0f0f0"></div>
<div class="a" style="left:343.5px;top:721px;width:14px;height:95px;background:#c9c9c9"></div>
<svg class="a" style="left:344px;top:703px" width="14" height="12"><path d="M1.8 9.2L7 4L12.2 9.2" fill="none" stroke="#555" stroke-width="2.3"/></svg>
<svg class="a" style="left:344px;top:849px" width="14" height="12"><path d="M1.8 2.8L7 8L12.2 2.8" fill="none" stroke="#555" stroke-width="2.3"/></svg>
<div class="a" style="left:801px;top:747px;width:15px;height:1px;background:#ddd"></div>
<div class="a" style="left:833px;top:747px;width:8px;height:1px;background:#777"></div>
<div class="a" style="left:784px;top:762px;width:4px;height:1px;background:#999"></div>
<div class="a" style="left:754px;top:695px;width:1077px;height:16px;background:#eeeeee"></div>
<div class="a" style="left:755.8px;top:698.3px;font-size:11px;color:#333;font-weight:bold;letter-spacing:-0.05px">Computername</div>
<div class="a" style="left:910.2px;top:698.3px;font-size:11px;color:#333;font-weight:bold;letter-spacing:-0.05px">Aufgetreten um</div>
<div class="a" style="left:1063.0px;top:698.3px;font-size:11px;color:#333;font-weight:bold;letter-spacing:-0.05px">Schweregrad</div>
<div class="a" style="left:1216.8px;top:698.3px;font-size:11px;color:#333;font-weight:bold;letter-spacing:-0.05px">Quelle</div>
<div class="a" style="left:1370.5px;top:698.3px;font-size:11px;color:#333;font-weight:bold;letter-spacing:-0.05px">Funktion</div>
<div class="a" style="left:1523.7px;top:698.3px;font-size:11px;color:#333;font-weight:bold;letter-spacing:-0.05px">Status</div>
<div class="a" style="left:1677.6px;top:698.3px;font-size:11px;color:#333;font-weight:bold;letter-spacing:-0.05px">Problem</div>
<div class="a" style="left:912.8px;top:716.5px;font-size:11px;color:#333;font-weight:normal;letter-spacing:-0.2px">2017 Mai 22 10:20:21</div>
<svg class="a" style="left:1066px;top:715px" width="16" height="14" viewBox="0 0 16 14"><path d="M8 0.3L15.8 13.8H0.2Z" fill="#d9433c"/><rect x="7" y="4" width="2" height="5.3" fill="#fff"/><rect x="7" y="10.4" width="2" height="2" fill="#fff"/></svg>
<div class="a" style="left:1086.5px;top:716.5px;font-size:11px;color:#333;font-weight:normal;letter-spacing:-0.15px">Kritisch</div>
<div class="a" style="left:1219.8px;top:716.5px;font-size:11px;color:#333;font-weight:normal;letter-spacing:-0.1px">Sicherheitsprodukt</div>
<div class="a" style="left:1373.5px;top:716.5px;font-size:11px;color:#333;font-weight:normal;letter-spacing:-0.1px">Sonstige</div>
<div class="a" style="left:1526.7px;top:716.5px;font-size:11px;color:#333;font-weight:normal;letter-spacing:-0.05px">Sicherheitsrisiko</div>
<div class="a" style="left:1680.0px;top:716.5px;font-size:11px;color:#333;font-weight:normal;letter-spacing:-0.1px">Phishing-Schutz ist nicht fun...</div>
<div class="a" style="left:912.8px;top:738.5px;font-size:11px;color:#333;font-weight:normal;letter-spacing:-0.2px">2017 Mai 22 10:20:21</div>
<svg class="a" style="left:1066px;top:737px" width="16" height="14" viewBox="0 0 16 14"><path d="M8 0.3L15.8 13.8H0.2Z" fill="#d9433c"/><rect x="7" y="4" width="2" height="5.3" fill="#fff"/><rect x="7" y="10.4" width="2" height="2" fill="#fff"/></svg>
<div class="a" style="left:1086.5px;top:738.5px;font-size:11px;color:#333;font-weight:normal;letter-spacing:-0.15px">Kritisch</div>
<div class="a" style="left:1219.8px;top:738.5px;font-size:11px;color:#333;font-weight:normal;letter-spacing:-0.1px">Sicherheitsprodukt</div>
<div class="a" style="left:1373.5px;top:738.5px;font-size:11px;color:#333;font-weight:normal;letter-spacing:-0.1px">Sonstige</div>
<div class="a" style="left:1526.7px;top:738.5px;font-size:11px;color:#333;font-weight:normal;letter-spacing:-0.05px">Sicherheitsrisiko</div>
<div class="a" style="left:1680.0px;top:738.5px;font-size:11px;color:#333;font-weight:normal;letter-spacing:-0.1px">Viren- und Spyware-Schutz i...</div>
<div class="a" style="left:912.8px;top:760.5px;font-size:11px;color:#333;font-weight:normal;letter-spacing:-0.2px">2017 Mai 23 09:30:11</div>
<svg class="a" style="left:1066px;top:758px" width="16" height="16" viewBox="0 0 16 16"><circle cx="8" cy="8" r="8" fill="#f2b90c"/><rect x="7" y="3.3" width="2" height="6.2" fill="#fff"/><rect x="7" y="10.8" width="2" height="2" fill="#fff"/></svg>
<div class="a" style="left:1086.5px;top:760.5px;font-size:11px;color:#333;font-weight:normal;letter-spacing:-0.15px">Warnung</div>
<div class="a" style="left:1219.8px;top:760.5px;font-size:11px;color:#333;font-weight:normal;letter-spacing:-0.1px">Sicherheitsprodukt</div>
<div class="a" style="left:1373.5px;top:760.5px;font-size:11px;color:#333;font-weight:normal;letter-spacing:-0.1px">Sonstige</div>
<div class="a" style="left:1526.7px;top:760.5px;font-size:11px;color:#333;font-weight:normal;letter-spacing:-0.05px">Sicherheitsbenachrichtigung</div>
<div class="a" style="left:1680.0px;top:760.5px;font-size:11px;color:#333;font-weight:normal;letter-spacing:-0.1px">Präsentationsmodus ist aktiv...</div>
<div class="a" style="left:912.8px;top:782.5px;font-size:11px;color:#333;font-weight:normal;letter-spacing:-0.2px">2017 Mai 16 08:44:17</div>
<svg class="a" style="left:1066px;top:780px" width="16" height="16" viewBox="0 0 16 16"><circle cx="8" cy="8" r="8" fill="#f2b90c"/><rect x="7" y="3.3" width="2" height="6.2" fill="#fff"/><rect x="7" y="10.8" width="2" height="2" fill="#fff"/></svg>
<div class="a" style="left:1086.5px;top:782.5px;font-size:11px;color:#333;font-weight:normal;letter-spacing:-0.15px">Warnung</div>
<div class="a" style="left:1219.8px;top:782.5px;font-size:11px;color:#333;font-weight:normal;letter-spacing:-0.1px">Betriebssystem</div>
<div class="a" style="left:1373.5px;top:782.5px;font-size:11px;color:#333;font-weight:normal;letter-spacing:-0.1px">Update</div>
<div class="a" style="left:1526.7px;top:782.5px;font-size:11px;color:#333;font-weight:normal;letter-spacing:-0.05px">Sicherheitsbenachrichtigung</div>
<div class="a" style="left:1680.0px;top:782.5px;font-size:11px;color:#333;font-weight:normal;letter-spacing:-0.1px">Das Windows-Sicherheitsce...</div>
</body></html>
